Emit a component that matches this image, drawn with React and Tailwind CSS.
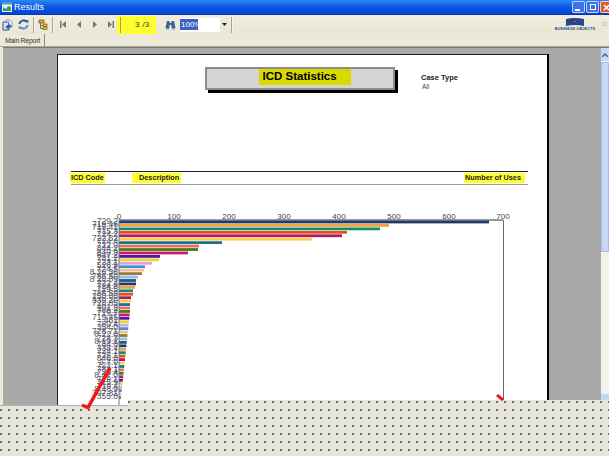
const FONT = "font-['Liberation_Sans',Arial,sans-serif]";

const COLORS = ["#1f3a6e","#f4a040","#0a9070","#e8501f","#b01a5a","#ffd050","#1f7090","#e07060","#4a7a10","#c81a6a","#5a10a0","#dcdc30","#e0a0e0","#4090e0","#f8c090","#a07830","#90c0f0","#305080"];
const ENDS = [489,389,380,347,342,312,222,199,198,188,160,159,152,145,144,142,138,136,136,135,133,133,131,131,130,130];
const LABELS = ["729.2","719.46","719.41","715.3","724.2","722.52","724.4","722.0","844.2","840.9","847.2","781.2","723.1","526.9","724.5","8 26.36","786.50","8 28.09","722.4","724.8","729.5","786.59","250.00","339.20","728.85","401.9","786.2","719.7","719.45","462","780.4","354.0","728.71","8 22.0","724.3","8 19.1","784.0","338.4","724.1","726.1","846.0","3 7.0","722.1","784.1","723.4","8 47.0","729.1","715.9","719.4","8 48.9","307.81","355.0"];
const BARS = LABELS.map((label, i) => ({
  label,
  end: i < ENDS.length ? ENDS[i] : 130 - (i - 26) * 0.36,
  color: COLORS[i % COLORS.length],
  y: 220.6 + i * 3.44,
}));
const TICKS = [[119,0],[174,100],[229,200],[284,300],[339,400],[394,500],[449,600],[503,700]];

function Chart() {
  return (
    <svg width="440" height="196" viewBox="80 210 440 196" className="ml-[22px] mt-[25px] shrink-0">
      {BARS.map((b) => (
        <text key={b.label + b.y} x="118" y={b.y + 3} textAnchor="end" fontSize="8.500" fill="#55556a" fontFamily="Liberation Sans">{b.label}</text>
      ))}
      {BARS.map((b) => (
        <rect key={b.y} x="119" y={b.y} width={b.end - 119} height="2.800" fill={b.color} />
      ))}
      <line x1="119" y1="220" x2="503" y2="220" stroke="#333" strokeWidth="1" />
      <line x1="119" y1="220" x2="119" y2="406" stroke="#777" strokeWidth="1" />
      <line x1="503.5" y1="220" x2="503.5" y2="406" stroke="#666" strokeWidth="1" />
      {TICKS.map(([x, v]) => (
        <text key={v} x={x} y="219" textAnchor="middle" fontSize="8" fill="#444" fontFamily="Liberation Sans">{v}</text>
      ))}
    </svg>
  );
}

function Sep({ className = "" }) {
  return <div className={`w-[2px] h-[16px] border-l border-[#a8a590] bg-white/50 shrink-0 ${className}`} />;
}

function Nav({ d, className }) {
  return (
    <svg width="6" height="7" viewBox="0 0 6 7" className={`shrink-0 ${className}`}>
      <path d={d} fill="#777" />
    </svg>
  );
}

function Toolbar() {
  return (
    <div className="h-[19px] shrink-0 flex items-center bg-gradient-to-b from-[#f1eee0] to-[#e9e6d3]">
      <svg width="11" height="12" viewBox="0 0 11 12" className="ml-[2px] shrink-0">
        <path d="M1 3h6v8H1z" fill="#dfe7f2" stroke="#34507c" strokeWidth="1" />
        <path d="M4 1h4l2 2v5H7V3H4z" fill="#fff" stroke="#5a6e92" strokeWidth=".7" />
        <path d="M3 8l4-3 3 2-4 3z" fill="#2a62b8" />
      </svg>
      <svg width="11" height="11" viewBox="0 0 11 11" className="ml-[5px] shrink-0">
        <path d="M1.500 5a4 4 0 0 1 7-2.200" fill="none" stroke="#2c5ea8" strokeWidth="2" />
        <path d="M9.500 6a4 4 0 0 1-7 2.200" fill="none" stroke="#5f8fd0" strokeWidth="2" />
        <path d="M7 1l3.500.2L10 4.600z" fill="#2c5ea8" />
        <path d="M4 10l-3.500-.2L1 6.400z" fill="#5f8fd0" />
      </svg>
      <Sep className="ml-[4px]" />
      <svg width="10" height="11" viewBox="0 0 10 11" className="ml-[3px] shrink-0">
        <path d="M1 1h5v3H1z" fill="#e8a818" stroke="#7a5a10" strokeWidth=".8" />
        <path d="M2.500 4v5.500H5M2.500 6.500H5" fill="none" stroke="#555" strokeWidth=".8" />
        <path d="M5 5h4v2.500H5zM5 8h4v2.500H5z" fill="#f0c040" stroke="#7a5a10" strokeWidth=".7" />
      </svg>
      <Sep className="ml-[4px]" />
      <Nav className="ml-[6px]" d="M0 0h1.500v7H0zM6 0v7L2 3.500z" />
      <Nav className="ml-[10px]" d="M5 0v7L1 3.500z" />
      <Nav className="ml-[10px]" d="M1 0v7l4-3.500z" />
      <Nav className="ml-[10px]" d="M0 0v7l4-3.500zM4.500 0H6v7H4.500z" />
      <div className="ml-[3px] w-[39px] h-[18px] shrink-0 bg-[#ffff2e] flex items-center text-[8px] text-[#333] leading-none">
        <div className="ml-[3px] w-[1px] h-[16px] bg-[#a8a840]" />
        <span className="ml-[14px]">3</span>
        <span className="ml-[3px]">/3</span>
      </div>
      <svg width="11" height="10" viewBox="0 0 11 10" className="ml-[9px] shrink-0">
        <path d="M2 1h2.500v2h2V1H9l1.500 7H6.500V5h-2v3H.5z" fill="#3a5e9c" />
        <path d="M1 8h3v1.500H1zM7 8h3v1.500H7z" fill="#7d9ac8" />
      </svg>
      <div className="ml-[4px] w-[49px] h-[14px] shrink-0 flex items-center bg-white">
        <span className="w-[18px] h-[11px] bg-[#3a62c0] text-white text-[8px] leading-[11px] pl-[1px]">100%</span>
        <div className="ml-auto w-[9px] h-[14px] bg-[#ece9d8] flex items-center justify-center">
          <svg width="5" height="3" viewBox="0 0 5 3"><path d="M0 0h5L2.500 3z" fill="#222" /></svg>
        </div>
      </div>
      <Sep className="ml-[2px]" />
      <div className="ml-auto mr-[15px] w-[38px] flex flex-col items-center shrink-0">
        <svg width="18" height="8" viewBox="0 0 18 8" className="block">
          <path d="M0 1q9-2 18 0v7q-9-2-18 0z" fill="#27468e" />
          <path d="M8 3h2v1H8z" fill="#c2506a" />
        </svg>
        <span className="text-[4px] font-bold leading-[6px] text-[#2c4a98] whitespace-nowrap">BUSINESS OBJECTS</span>
      </div>
      <span className="absolute left-[601px] top-[21px] text-[6px] leading-[6px] text-[#bdbdb0]">30</span>
    </div>
  );
}

function WinBtn({ className, children }) {
  return (
    <div className={`w-[13px] h-[12px] rounded-[2px] border border-white/70 shrink-0 flex items-center justify-center ${className}`}>
      {children}
    </div>
  );
}

function TitleBar() {
  return (
    <div className="h-[15px] shrink-0 flex items-center bg-gradient-to-b from-[#2c86f2] via-[#0a58e4] to-[#0546d6] border-b border-[#0a34a8]">
      <svg width="10" height="10" viewBox="0 0 10 10" className="ml-[2px] shrink-0">
        <path d="M0 0h10v10H0z" fill="#e8f0f4" />
        <path d="M0 0h10v2.500H0z" fill="#4aa0c8" />
        <path d="M1 9V5l3 2 2-3 3 1v4z" fill="#3c9a60" />
      </svg>
      <span className="ml-[2px] text-[9px] leading-none text-white">Results</span>
      <div className="ml-auto flex gap-[1px] w-[41px] shrink-0 -mr-[4px]">
        <WinBtn className="bg-[#3d73e6]"><div className="w-[5px] h-[2px] bg-white mt-[6px] mr-[2px]" /></WinBtn>
        <WinBtn className="bg-[#3d73e6]"><div className="w-[6px] h-[6px] border border-white" /></WinBtn>
        <WinBtn className="bg-[#e25a30]">
          <svg width="7" height="7" viewBox="0 0 7 7"><path d="M1 1l5 5M6 1L1 6" stroke="#fff" strokeWidth="1.500" /></svg>
        </WinBtn>
      </div>
    </div>
  );
}

function Scrollbar() {
  return (
    <div className="w-[8px] h-[353px] ml-auto shrink-0 bg-[#f3f2ea] flex flex-col">
      <div className="h-[13px] bg-[#c6d6f6] flex items-center justify-center shrink-0">
        <svg width="6" height="4" viewBox="0 0 6 4"><path d="M0 4l3-3 3 3" fill="none" stroke="#3a5e9c" strokeWidth="1.300" /></svg>
      </div>
      <div className="h-[190px] bg-[#c9d8f8] border border-[#a9bcec] mt-[1px]" />
      <div className="mt-auto h-[7px] bg-[#c6d6f6]" />
    </div>
  );
}

function Page() {
  return (
    <div className="ml-[54px] mt-[6px] w-[490px] h-[360px] shrink-0 bg-white border-t border-l border-[#222] shadow-[2px_0_0_#000] flex flex-col overflow-hidden">
      <div className="flex mt-[12px] h-[24px] shrink-0">
        <div className="ml-[147px] w-[190px] h-[23px] bg-[#d4d4d4] border-2 border-[#8c8c8c] shadow-[3px_3px_0_#000] shrink-0 flex justify-center">
          <div className="ml-[9px] h-[16px] w-[92px] bg-[#d9d900] text-[11.500px] leading-[14px] font-bold text-black pl-[4px] whitespace-nowrap">ICD Statistics</div>
        </div>
        <div className="ml-[26px] mt-[6px] flex flex-col shrink-0">
          <span className="text-[7.500px] leading-[9px] font-bold text-[#222]">Case Type</span>
          <span className="text-[6.500px] leading-[8px] text-[#444] mt-[1px] ml-[1px]">All</span>
        </div>
      </div>
      <div className="ml-[13px] mr-[19px] mt-[80px] h-[14px] shrink-0 border-t-[1.5px] border-b-[1.5px] border-t-[#222] border-b-[#999] flex items-center text-[7.300px] font-bold text-[#222]">
        <span className="w-[35px] h-[10px] -ml-[1px] pl-[1px] leading-[10px] bg-[#ffff2e] whitespace-nowrap">ICD Code</span>
        <span className="ml-[27px] w-[49px] h-[10px] pl-[7px] leading-[10px] bg-[#ffff2e] whitespace-nowrap">Description</span>
        <span className="ml-auto mr-[3px] w-[61px] h-[10px] pl-[1px] leading-[10px] bg-[#ffff2e] whitespace-nowrap">Number of Uses</span>
      </div>
      <Chart />
    </div>
  );
}

export default function App() {
  return (
    <div className={`relative w-[609px] h-[456px] overflow-hidden flex flex-col bg-[#ece9d8] ${FONT}`}>
      <TitleBar />
      <Toolbar />
      <div className="h-[13px] shrink-0 flex items-center bg-[#ece9d8] text-[7px] tracking-[-0.3px] text-[#333] border-b border-[#aaa89a]">
        <span className="ml-[5px] leading-none">Main Report</span>
        <div className="ml-[4px] w-[1px] h-[12px] bg-[#8c8a7c]" />
      </div>
      <div className="flex-1 flex min-h-0 pl-[3px] bg-[#ece9d8] overflow-hidden">
        <div className="flex-1 flex min-w-0 bg-[#a9a9a9] border-t border-[#777]">
          <Page />
          <Scrollbar />
        </div>
      </div>
      <div className="absolute left-0 right-0 top-[400px] bottom-0 bg-[#e6e6dc] bg-[radial-gradient(circle_at_4px_4px,#2a2a2a_0.500px,transparent_1.100px)] bg-[length:8px_8px] bg-[position:-3px_-2px] [clip-path:polygon(0_5px,128px_5px,128px_0,100%_0,100%_100%,0_100%)]" />
      <div className="absolute left-0 top-[405px] w-[128px] h-[1px] bg-[#b5b3a0]" />
      <svg width="32" height="46" viewBox="80 365 32 46" className="absolute left-[80px] top-[365px]">
        <path d="M82 405l6 2.500L110 368" fill="none" stroke="#f01818" strokeWidth="3.500" />
      </svg>
      <svg width="9" height="7" viewBox="496 394 9 7" className="absolute left-[496px] top-[394px]">
        <path d="M497 395l6 5" fill="none" stroke="#f01818" strokeWidth="3" />
      </svg>
    </div>
  );
}
